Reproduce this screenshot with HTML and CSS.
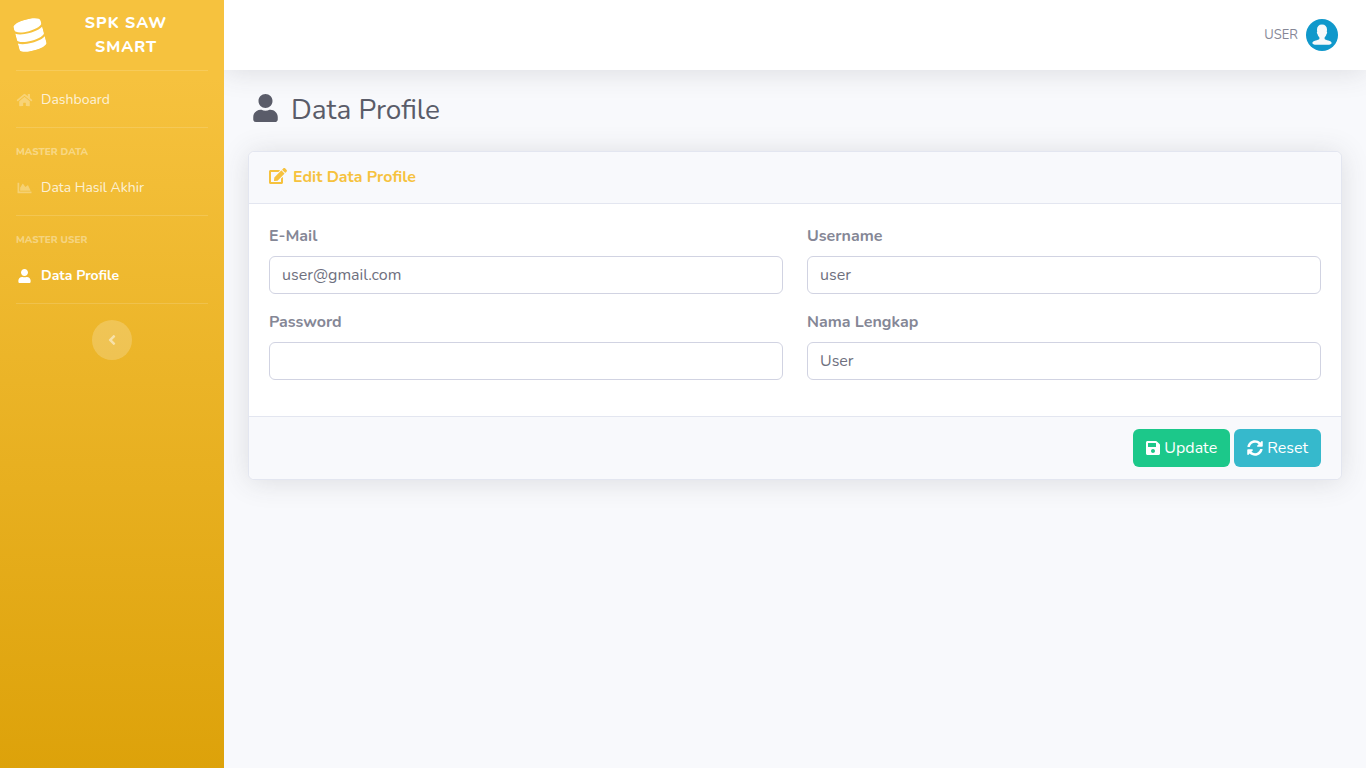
FILE: index.html
```html
<!DOCTYPE html>
<html lang="id">
<head>
<meta charset="utf-8">
<meta name="viewport" content="width=device-width, initial-scale=1">
<title>Data Profile</title>
<link rel="stylesheet" href="styles.css">
</head>
<body>
<div class="wrapper">
  <nav class="sidebar">
    <a class="brand" href="#">
      <svg class="brand-icon" viewBox="0 0 448 512" aria-hidden="true"><path d="M448 73.143v45.714C448 159.143 347.667 192 224 192S0 159.143 0 118.857V73.143C0 32.857 100.333 0 224 0s224 32.857 224 73.143zM448 176v102.857C448 319.143 347.667 352 224 352S0 319.143 0 278.857V176c48.125 33.143 136.208 48.572 224 48.572S399.874 209.143 448 176zm0 160v102.857C448 479.143 347.667 512 224 512S0 479.143 0 438.857V336c48.125 33.143 136.208 48.572 224 48.572S399.874 369.143 448 336z"/></svg>
      <span class="brand-text">SPK SAW SMART</span>
    </a>
    <hr class="divider">
    <a class="nav-link" href="#">
      <svg class="nav-icon" viewBox="0 0 576 512" aria-hidden="true"><path d="M280.37 148.26L96 300.11V464a16 16 0 0 0 16 16l112.06-.29a16 16 0 0 0 15.92-16V368a16 16 0 0 1 16-16h64a16 16 0 0 1 16 16v95.64a16 16 0 0 0 16 16.05L464 480a16 16 0 0 0 16-16V300L295.67 148.26a12.19 12.19 0 0 0-15.3 0zM571.6 251.47L488 182.56V44.05a12 12 0 0 0-12-12h-56a12 12 0 0 0-12 12v72.61L318.47 43a48 48 0 0 0-61 0L4.34 251.47a12 12 0 0 0-1.6 16.9l25.5 31A12 12 0 0 0 45.15 301l235.22-193.74a12.19 12.19 0 0 1 15.3 0L530.9 301a12 12 0 0 0 16.9-1.6l25.5-31a12 12 0 0 0-1.7-16.93z"/></svg>
      <span>Dashboard</span>
    </a>
    <hr class="divider">
    <div class="nav-heading">Master Data</div>
    <a class="nav-link" href="#">
      <svg class="nav-icon" viewBox="0 0 512 512" aria-hidden="true"><path d="M500 384c6.6 0 12 5.4 12 12v40c0 6.6-5.4 12-12 12H12c-6.6 0-12-5.4-12-12V76c0-6.6 5.4-12 12-12h40c6.6 0 12 5.4 12 12v308h436zM372.7 159.5L288 216l-85.3-113.7c-5.1-6.8-15.5-6.3-19.9 1L96 248v104h384l-89.9-187.8c-3.2-6.5-11.4-8.7-17.4-4.7z"/></svg>
      <span>Data Hasil Akhir</span>
    </a>
    <hr class="divider">
    <div class="nav-heading">Master User</div>
    <a class="nav-link active" href="#">
      <svg class="nav-icon" viewBox="0 0 448 512" aria-hidden="true"><path d="M224 256c70.7 0 128-57.3 128-128S294.7 0 224 0 96 57.3 96 128s57.3 128 128 128zm89.6 32h-16.7c-22.2 10.2-46.9 16-72.9 16s-50.6-5.8-72.9-16h-16.7C60.2 288 0 348.2 0 422.4V464c0 26.5 21.5 48 48 48h352c26.5 0 48-21.5 48-48v-41.6c0-74.2-60.2-134.4-134.4-134.4z"/></svg>
      <span>Data Profile</span>
    </a>
    <hr class="divider">
    <button class="sidebar-toggle" type="button" aria-label="Toggle sidebar">
      <svg viewBox="0 0 256 512" aria-hidden="true"><path d="M31.7 239l136-136c9.4-9.4 24.6-9.4 33.9 0l22.6 22.6c9.4 9.4 9.4 24.6 0 33.9L127.9 256l96.4 96.4c9.4 9.4 9.4 24.6 0 33.9L201.7 409c-9.4 9.4-24.6 9.4-33.9 0l-136-136c-9.5-9.4-9.5-24.6-.1-34z"/></svg>
    </button>
  </nav>

  <div class="content">
    <header class="topbar">
      <a class="user-menu" href="#">
        <span>USER</span>
        <svg class="avatar" viewBox="0 0 32 32" aria-hidden="true"><circle cx="16" cy="16" r="16" fill="#1098cb"/><path fill="#f8f9fa" d="M16 5.500c-3.200 0-5 2-5 5 0 .8.100 1.500.2 2.200-.6.300-.4 1.700.3 2.400.4 1.700 1.100 2.600 1.900 3.400v1.500c-.5.700-2 1.100-3.700 1.600-2.200.6-3.200 1.200-3.400 2.600 1 1.200 2.200 1.600 3.700 1.600h12c1.500 0 2.700-.4 3.700-1.600-.2-1.400-1.200-2-3.400-2.600-1.700-.5-3.200-.9-3.700-1.600v-1.500c.8-.8 1.500-1.700 1.900-3.400.7-.7.900-2.100.3-2.400.1-.7.200-1.400.2-2.200 0-3-1.800-5-5-5z"/></svg>
      </a>
    </header>

    <main class="page">
      <h1 class="page-title">
        <svg class="title-icon" viewBox="0 0 448 512" aria-hidden="true"><path d="M224 256c70.7 0 128-57.3 128-128S294.7 0 224 0 96 57.3 96 128s57.3 128 128 128zm89.6 32h-16.7c-22.2 10.2-46.9 16-72.9 16s-50.6-5.8-72.9-16h-16.7C60.2 288 0 348.2 0 422.4V464c0 26.5 21.5 48 48 48h352c26.5 0 48-21.5 48-48v-41.6c0-74.2-60.2-134.4-134.4-134.4z"/></svg>
        <span>Data Profile</span>
      </h1>

      <form class="card">
        <h2 class="card-header">
          <svg class="edit-icon" viewBox="0 0 576 512" aria-hidden="true"><path d="M402.6 83.2l90.2 90.2c3.8 3.8 3.8 10 0 13.8L274.4 405.6l-92.8 10.3c-12.4 1.4-22.9-9.1-21.5-21.5l10.3-92.8L388.8 83.2c3.8-3.8 10-3.8 13.8 0zm162-22.900l-48.800-48.800c-15.200-15.200-39.900-15.200-55.200 0l-35.400 35.400c-3.800 3.800-3.800 10 0 13.800l90.200 90.200c3.800 3.800 10 3.800 13.800 0l35.400-35.400c15.200-15.300 15.200-40 0-55.200zM384 346.200V448H64V128h229.800c3.200 0 6.200-1.300 8.500-3.500l40-40c7.600-7.600 2.200-20.500-8.500-20.500H48C21.500 64 0 85.500 0 112v352c0 26.500 21.500 48 48 48h352c26.500 0 48-21.500 48-48V306.200c0-10.700-12.900-16-20.500-8.500l-40 40c-2.200 2.300-3.500 5.300-3.500 8.500z"/></svg>
          <span>Edit Data Profile</span>
        </h2>
        <div class="card-body">
          <div class="field">
            <label for="email">E-Mail</label>
            <input id="email" type="email" value="user@gmail.com">
          </div>
          <div class="field">
            <label for="username">Username</label>
            <input id="username" type="text" value="user">
          </div>
          <div class="field">
            <label for="password">Password</label>
            <input id="password" type="password">
          </div>
          <div class="field">
            <label for="nama">Nama Lengkap</label>
            <input id="nama" type="text" value="User">
          </div>
        </div>
        <div class="card-footer">
          <button class="btn btn-success" type="submit">
            <svg class="save-icon" viewBox="0 0 448 512" aria-hidden="true"><path d="M433.941 129.941l-83.882-83.882A48 48 0 0 0 316.118 32H48C21.490 32 0 53.490 0 80v352c0 26.510 21.490 48 48 48h352c26.510 0 48-21.490 48-48V163.882a48 48 0 0 0-14.059-33.941zM224 416c-35.346 0-64-28.654-64-64 0-35.346 28.654-64 64-64s64 28.654 64 64c0 35.346-28.654 64-64 64zm96-304.520V212c0 6.627-5.373 12-12 12H76c-6.627 0-12-5.373-12-12V108c0-6.627 5.373-12 12-12h228.520c3.183 0 6.235 1.264 8.485 3.515l3.480 3.480A11.996 11.996 0 0 1 320 111.480z"/></svg>
            <span>Update</span>
          </button>
          <button class="btn btn-info" type="reset">
            <svg class="reset-icon" viewBox="0 0 512 512" aria-hidden="true"><path d="M370.720 133.280C339.458 104.008 298.888 87.962 255.848 88c-77.458.068-144.328 53.178-162.791 126.850-1.344 5.363-6.122 9.150-11.651 9.150H24.103c-7.498 0-13.194-6.807-11.807-14.176C33.933 94.924 134.813 8 256 8c66.448 0 126.791 26.136 171.315 68.685L463.030 40.970C478.149 25.851 504 36.559 504 57.941V192c0 13.255-10.745 24-24 24H345.941c-21.382 0-32.090-25.851-16.971-40.971l41.750-41.749zM32 296h134.059c21.382 0 32.090 25.851 16.971 40.971l-41.750 41.750c31.262 29.273 71.835 45.319 114.876 45.280 77.418-.070 144.315-53.144 162.787-126.849 1.344-5.363 6.122-9.150 11.651-9.150h57.304c7.498 0 13.194 6.807 11.807 14.176C478.067 417.076 377.187 504 256 504c-66.448 0-126.791-26.136-171.315-68.685L48.970 471.030C33.851 486.149 8 475.441 8 454.059V320c0-13.255 10.745-24 24-24z"/></svg>
            <span>Reset</span>
          </button>
        </div>
      </form>
    </main>
  </div>
</div>
</body>
</html>
```
FILE: styles.css
```css
*,
*::before,
*::after {
  box-sizing: border-box;
}

body {
  margin: 0;
  background: #f8f9fc;
  color: #858796;
  font-family: Nunito, Lato, sans-serif;
  font-size: 16px;
  line-height: 24px;
}

svg {
  display: block;
  flex: none;
  fill: currentColor;
}

a {
  color: inherit;
  text-decoration: none;
}

.wrapper {
  display: flex;
  min-height: 100vh;
}

/* Sidebar */
.sidebar {
  display: flex;
  flex: none;
  flex-direction: column;
  z-index: 1;
  width: 224px;
  background: linear-gradient(180deg, #f6c23e 10%, #dda20a 100%);
}

.brand {
  display: flex;
  align-items: center;
  height: 70px;
  padding: 0 16px;
  color: #fff;
  font-weight: 800;
  letter-spacing: 1px;
  text-align: center;
}

.brand-icon {
  width: 28px;
  height: 32px;
  transform: rotate(-15deg);
}

.brand-text {
  flex: 1;
  padding: 0 32px;
}

.divider {
  width: 192px;
  height: 1px;
  margin: 0 16px;
  border: 0;
  background: rgba(255, 255, 255, 0.15);
}

.nav-heading {
  padding: 17px 16px 0;
  color: rgba(255, 255, 255, 0.4);
  font-size: 10px;
  font-weight: 800;
  line-height: 14px;
  text-transform: uppercase;
}

.nav-link {
  display: flex;
  align-items: center;
  gap: 8px;
  padding: 17px 16px 15px;
  color: rgba(255, 255, 255, 0.8);
  font-size: 14px;
}

.nav-icon {
  width: 17px;
  height: 14px;
  margin-bottom: 1px;
  opacity: 0.375;
}

.nav-link.active {
  color: #fff;
  font-weight: 700;
}

.nav-link.active .nav-icon {
  opacity: 1;
}

.sidebar-toggle {
  display: flex;
  align-items: center;
  justify-content: center;
  align-self: center;
  width: 40px;
  height: 40px;
  margin-top: 16px;
  padding: 0;
  border: 0;
  border-radius: 50%;
  background: rgba(255, 255, 255, 0.2);
  color: rgba(255, 255, 255, 0.5);
}

.sidebar-toggle svg {
  width: 8px;
  height: 16px;
}

/* Top bar */
.content {
  flex: 1;
  min-width: 0;
}

.topbar {
  display: flex;
  align-items: center;
  justify-content: flex-end;
  height: 70px;
  padding: 0 28px;
  background: #fff;
  box-shadow: 0 2px 28px rgba(58, 59, 69, 0.15);
}

.user-menu {
  display: flex;
  align-items: center;
  gap: 8px;
  font-size: 13px;
}

.avatar {
  width: 32px;
  height: 32px;
}

/* Page */
.page {
  padding: 24px;
}

.page-title {
  display: flex;
  align-items: flex-start;
  gap: 8px;
  margin: 0 0 24px;
  color: #5a5c69;
  font-size: 28px;
  font-weight: 400;
  line-height: 33px;
}

.title-icon {
  width: 35px;
  height: 28px;
}

.card {
  border: 1px solid #e3e6f0;
  border-radius: 6px;
  background: #fff;
  box-shadow: 0 2px 28px rgba(58, 59, 69, 0.15);
}

.card-header {
  display: flex;
  align-items: flex-start;
  gap: 6px;
  margin: 0;
  padding: 16px 20px;
  border-bottom: 1px solid #e3e6f0;
  border-radius: 6px 6px 0 0;
  background: #f8f9fc;
  color: #f6c23e;
  font-size: 16px;
  font-weight: 700;
  line-height: 19px;
}

.edit-icon {
  width: 18px;
  height: 16px;
}

.card-body {
  display: grid;
  grid-template-columns: 1fr 1fr;
  gap: 16px 24px;
  padding: 20px 20px 36px;
}

.field label {
  display: block;
  margin-bottom: 8px;
  font-weight: 700;
}

.field input {
  display: block;
  width: 100%;
  height: 38px;
  padding: 6px 12px;
  border: 1px solid #d1d3e2;
  border-radius: 6px;
  background: #fff;
  color: #6e707e;
  font: inherit;
}

.card-footer {
  display: flex;
  justify-content: flex-end;
  gap: 4px;
  padding: 12px 20px;
  border-top: 1px solid #e3e6f0;
  border-radius: 0 0 6px 6px;
  background: #f8f9fc;
}

.btn {
  display: flex;
  align-items: center;
  gap: 4px;
  height: 38px;
  padding: 0 13px;
  border: 0;
  border-radius: 6px;
  color: #fff;
  font: inherit;
}

.btn-success {
  background: #1cc88a;
}

.btn-info {
  background: #36b9cc;
}

.save-icon {
  width: 14px;
  height: 16px;
}

.reset-icon {
  width: 16px;
  height: 16px;
}
```
